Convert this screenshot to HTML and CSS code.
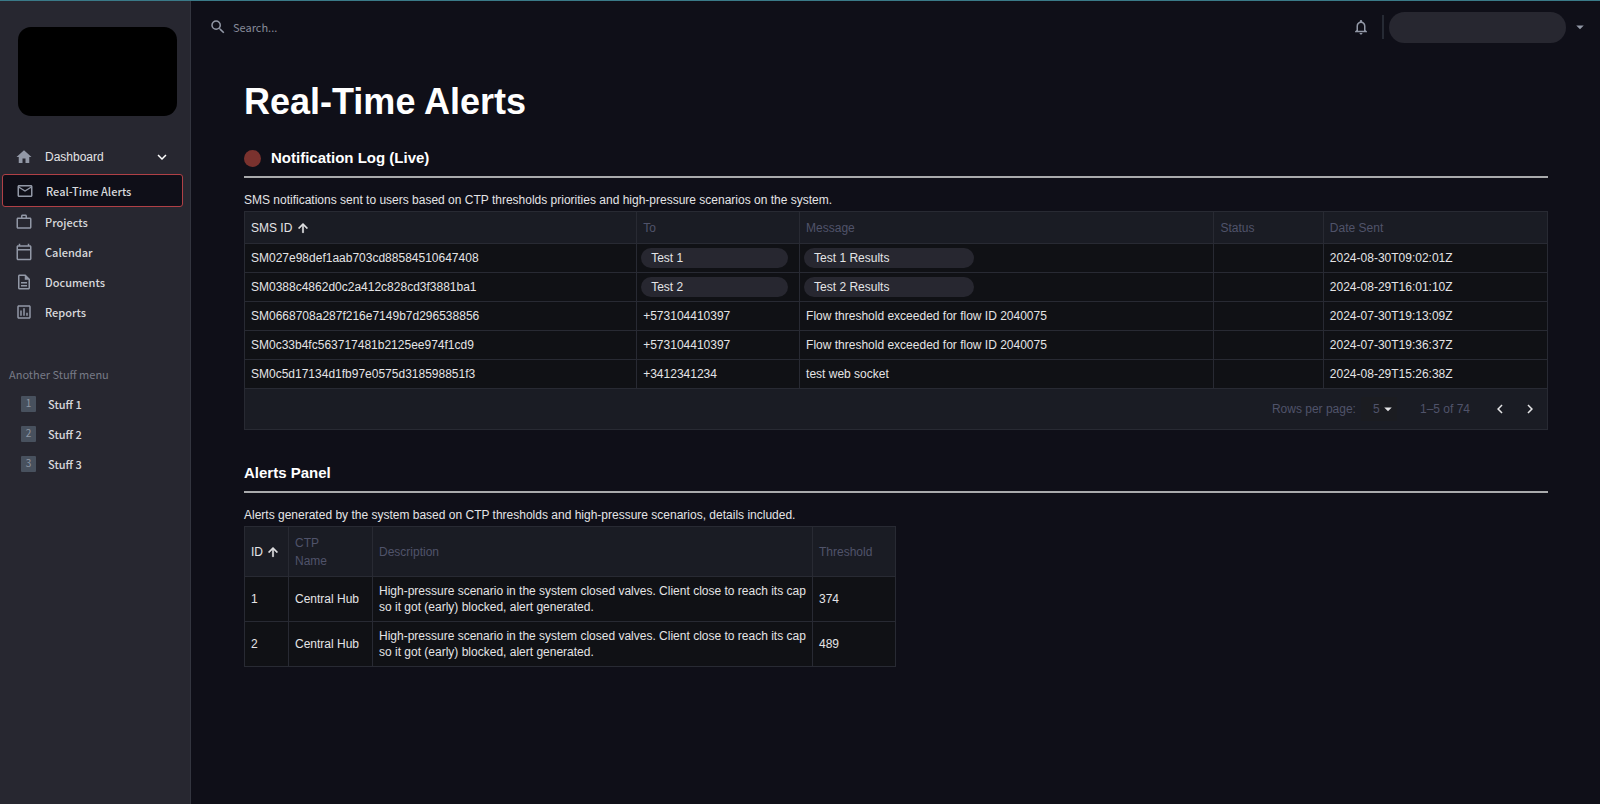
FILE: index.html
```html
<!DOCTYPE html>
<html lang="en">
<head>
<meta charset="UTF-8">
<meta name="viewport" content="width=device-width, initial-scale=1.0">
<title>Real-Time Alerts</title>
<link rel="stylesheet" href="styles.css">
</head>
<body>

<aside class="sidebar">
  <div class="logo"></div>

  <nav class="menu">
    <a href="#" class="dashboard">
      <svg viewBox="0 0 24 24"><path d="M10 20v-6h4v6h5v-8h3L12 3 2 12h3v8z"/></svg>
      <span>Dashboard</span>
      <svg class="chevron" viewBox="0 0 24 24"><path d="M7.41 8.59 12 13.17l4.59-4.58L18 10l-6 6-6-6z"/></svg>
    </a>
    <a href="#" class="active">
      <svg viewBox="0 0 24 24"><path d="M22 6c0-1.100-.9-2-2-2H4c-1.100 0-2 .9-2 2v12c0 1.100.9 2 2 2h16c1.100 0 2-.9 2-2zm-2 0-8 5-8-5zm0 12H4V8l8 5 8-5z"/></svg>
      <span>Real-Time Alerts</span>
    </a>
    <a href="#">
      <svg viewBox="0 0 24 24"><path d="M14 6V4h-4v2zM4 8v11h16V8zm16-2c1.110 0 2 .89 2 2v11c0 1.110-.89 2-2 2H4c-1.110 0-2-.89-2-2V8c0-1.110.89-2 2-2h4V4c0-1.110.89-2 2-2h4c1.110 0 2 .89 2 2v2z"/></svg>
      <span>Projects</span>
    </a>
    <a href="#">
      <svg viewBox="0 0 24 24"><path d="M20 3h-1V1h-2v2H7V1H5v2H4c-1.100 0-2 .9-2 2v16c0 1.100.9 2 2 2h16c1.100 0 2-.9 2-2V5c0-1.100-.9-2-2-2m0 18H4V10h16zm0-13H4V5h16z"/></svg>
      <span>Calendar</span>
    </a>
    <a href="#">
      <svg viewBox="0 0 24 24"><path d="M8 16h8v2H8zm0-4h8v2H8zm6-10H6c-1.100 0-2 .9-2 2v16c0 1.100.89 2 1.990 2H18c1.100 0 2-.9 2-2V8zm4 18H6V4h7v5h5z"/></svg>
      <span>Documents</span>
    </a>
    <a href="#">
      <svg viewBox="0 0 24 24"><path d="M19 3H5c-1.100 0-2 .9-2 2v14c0 1.100.9 2 2 2h14c1.100 0 2-.9 2-2V5c0-1.100-.9-2-2-2m0 16H5V5h14zM7 10h2v7H7zm4-3h2v10h-2zm4 6h2v4h-2z"/></svg>
      <span>Reports</span>
    </a>
  </nav>

  <h3 class="menu-title">Another Stuff menu</h3>
  <nav class="menu stuff">
    <a href="#"><span class="number">1</span><span>Stuff 1</span></a>
    <a href="#"><span class="number">2</span><span>Stuff 2</span></a>
    <a href="#"><span class="number">3</span><span>Stuff 3</span></a>
  </nav>
</aside>

<div class="page">
  <header class="topbar">
    <label class="search" for="searchInput">
      <svg viewBox="0 0 24 24"><path d="M15.500 14h-.79l-.28-.27A6.470 6.470 0 0 0 16 9.500 6.500 6.500 0 1 0 9.500 16c1.610 0 3.090-.59 4.230-1.570l.27.28v.79l5 4.990L20.490 19zm-6 0C7.010 14 5 11.990 5 9.500S7.010 5 9.500 5 14 7.010 14 9.500 11.990 14 9.500 14"/></svg>
      <input type="text" id="searchInput" placeholder="Search..." aria-label="Search">
    </label>
    <button type="button" class="bell" aria-label="Notifications">
      <svg viewBox="0 0 24 24"><path d="M12 22c1.100 0 2-.9 2-2h-4c0 1.100.9 2 2 2m6-6v-5c0-3.070-1.630-5.640-4.500-6.320V4c0-.83-.67-1.500-1.500-1.500s-1.500.67-1.500 1.500v.68C7.640 5.360 6 7.920 6 11v5l-2 2v1h16v-1zm-2 1H8v-6c0-2.480 1.510-4.500 4-4.500s4 2.020 4 4.500z"/></svg>
    </button>
    <button type="button" class="user" aria-label="Account">
      <span class="user-name"></span>
      <svg viewBox="0 0 24 24"><path d="m7 10 5 5 5-5z"/></svg>
    </button>
  </header>

  <main>
    <h1>Real-Time Alerts</h1>

    <section>
      <h2><span class="live-dot"></span>Notification Log (Live)</h2>
      <p>SMS notifications sent to users based on CTP thresholds priorities and high-pressure scenarios on the system.</p>
      <table class="log-table">
        <thead>
          <tr>
            <th class="sorted col-id">SMS ID <svg viewBox="0 0 24 24"><path d="m4 12 1.410 1.410L11 7.830V20h2V7.830l5.580 5.590L20 12l-8-8z"/></svg></th>
            <th class="col-to">To</th>
            <th class="col-message">Message</th>
            <th class="col-status">Status</th>
            <th>Date Sent</th>
          </tr>
        </thead>
        <tbody>
          <tr>
            <td>SM027e98def1aab703cd88584510647408</td>
            <td class="pill-cell"><span class="pill">Test 1</span></td>
            <td class="pill-cell"><span class="pill wide">Test 1 Results</span></td>
            <td></td>
            <td>2024-08-30T09:02:01Z</td>
          </tr>
          <tr>
            <td>SM0388c4862d0c2a412c828cd3f3881ba1</td>
            <td class="pill-cell"><span class="pill">Test 2</span></td>
            <td class="pill-cell"><span class="pill wide">Test 2 Results</span></td>
            <td></td>
            <td>2024-08-29T16:01:10Z</td>
          </tr>
          <tr>
            <td>SM0668708a287f216e7149b7d296538856</td>
            <td>+573104410397</td>
            <td>Flow threshold exceeded for flow ID 2040075</td>
            <td></td>
            <td>2024-07-30T19:13:09Z</td>
          </tr>
          <tr>
            <td>SM0c33b4fc563717481b2125ee974f1cd9</td>
            <td>+573104410397</td>
            <td>Flow threshold exceeded for flow ID 2040075</td>
            <td></td>
            <td>2024-07-30T19:36:37Z</td>
          </tr>
          <tr>
            <td>SM0c5d17134d1fb97e0575d318598851f3</td>
            <td>+3412341234</td>
            <td>test web socket</td>
            <td></td>
            <td>2024-08-29T15:26:38Z</td>
          </tr>
        </tbody>
      </table>
      <div class="pagination">
        <label for="rowsPerPage">Rows per page:</label>
        <div class="select">
          <select id="rowsPerPage">
            <option>5</option>
            <option>10</option>
            <option>25</option>
          </select>
          <svg viewBox="0 0 24 24"><path d="m7 10 5 5 5-5z"/></svg>
        </div>
        <span class="range">1–5 of 74</span>
        <button type="button" aria-label="Previous page"><svg viewBox="0 0 24 24"><path d="M15.410 7.410 14 6l-6 6 6 6 1.410-1.410L10.830 12z"/></svg></button>
        <button type="button" aria-label="Next page"><svg viewBox="0 0 24 24"><path d="M10 6 8.590 7.410 13.170 12l-4.580 4.590L10 18l6-6z"/></svg></button>
      </div>
    </section>

    <section>
      <h2>Alerts Panel</h2>
      <p>Alerts generated by the system based on CTP thresholds and high-pressure scenarios, details included.</p>
      <table class="alerts-table">
        <thead>
          <tr>
            <th class="sorted col-num">ID <svg viewBox="0 0 24 24"><path d="m4 12 1.410 1.410L11 7.830V20h2V7.830l5.580 5.590L20 12l-8-8z"/></svg></th>
            <th class="col-ctp">CTP<br>Name</th>
            <th class="col-desc">Description</th>
            <th>Threshold</th>
          </tr>
        </thead>
        <tbody>
          <tr>
            <td>1</td>
            <td>Central Hub</td>
            <td>High-pressure scenario in the system closed valves. Client close to reach its cap so it got (early) blocked, alert generated.</td>
            <td>374</td>
          </tr>
          <tr>
            <td>2</td>
            <td>Central Hub</td>
            <td>High-pressure scenario in the system closed valves. Client close to reach its cap so it got (early) blocked, alert generated.</td>
            <td>489</td>
          </tr>
        </tbody>
      </table>
    </section>
  </main>
</div>

</body>
</html>
```
FILE: styles.css
```css
* {
  box-sizing: border-box;
}
body {
  margin: 0;
  min-height: 100vh;
  display: flex;
  font-family: "Liberation Sans", Arial, sans-serif;
  font-size: 12px;
  background-color: #0f0f18;
  color: #e4e4e6;
  border-top: 1px solid #3a7a88;
}
svg {
  display: block;
  width: 18px;
  height: 18px;
  fill: currentColor;
}
button {
  background: none;
  border: none;
  padding: 0;
  color: inherit;
  cursor: pointer;
}

/* Sidebar */
.sidebar {
  flex: none;
  width: 191px;
  background-color: #272730;
  border-right: 1px solid #33353f;
  font-family: "Noto Sans CJK SC", sans-serif;
  font-size: 11px;
}
.logo {
  height: 89px;
  margin: 26px 13px 23px 18px;
  border-radius: 13px;
  background-color: #000;
}
.menu {
  display: flex;
  flex-direction: column;
  padding: 0 7px 0 2px;
}
.menu a {
  display: flex;
  align-items: center;
  gap: 12px;
  height: 30px;
  padding-left: 13px;
  color: #d8d9dc;
  font-weight: 500;
  text-decoration: none;
}
.menu svg {
  color: #9298a6;
}
.menu .dashboard {
  height: 35px;
  color: #e4e4e6;
  font-family: "Liberation Sans", Arial, sans-serif;
  font-size: 12px;
  font-weight: normal;
}
.menu .chevron {
  margin-left: auto;
  margin-right: 12px;
  color: #fff;
}
.menu .active {
  height: 33px;
  border: 1px solid #b04046;
  border-radius: 3px;
  background-color: #0f0f18;
}
.menu-title {
  margin: 35px 0 3px 9px;
  font-size: 11px;
  line-height: 24px;
  font-weight: normal;
  color: #777b87;
}
.stuff a {
  padding-left: 19px;
}
.number {
  width: 15px;
  height: 16px;
  border-radius: 1px;
  background-color: #48515e;
  color: #8f96a3;
  font-size: 10px;
  line-height: 13px;
  font-weight: normal;
  text-align: center;
}

/* Top bar */
.page {
  flex: 1;
  min-width: 0;
}
.topbar {
  display: flex;
  align-items: center;
  height: 52px;
  padding: 0 11px 0 18px;
  color: #9298a6;
}
.search {
  flex: 1;
  display: flex;
  align-items: center;
  gap: 6px;
}
.search input {
  flex: 1;
  padding: 0;
  border: none;
  outline: none;
  background: none;
  color: #e4e4e6;
  font-family: "Noto Sans CJK SC", sans-serif;
  font-size: 11px;
}
.search input::placeholder {
  color: #868b98;
}
.bell {
  padding-right: 12px;
}
.user {
  display: flex;
  align-items: center;
  gap: 5px;
}
.user::before {
  content: "";
  width: 2px;
  height: 24px;
  background-color: #262a34;
}
.user-name {
  width: 177px;
  height: 31px;
  border-radius: 16px;
  background-color: #272730;
}

/* Content */
main {
  padding: 28px 52px 40px 53px;
}
h1 {
  margin: 0 0 25px;
  font-size: 36px;
  line-height: 42px;
  color: #fff;
}
section {
  margin-bottom: 33px;
}
h2 {
  display: flex;
  align-items: center;
  gap: 10px;
  margin: 0;
  padding-bottom: 8px;
  border-bottom: 2px solid #a9aaac;
  font-size: 15px;
  line-height: 20px;
  color: #fff;
}
.live-dot {
  width: 17px;
  height: 17px;
  border-radius: 50%;
  background-color: #7a322e;
}
p {
  margin: 14px 0 3px;
  line-height: 16px;
}
table {
  width: 100%;
  table-layout: fixed;
  border-collapse: collapse;
  background-color: #101115;
}
th, td {
  height: 29px;
  padding: 0 6px;
  border: 1px solid #282a33;
  line-height: 16px;
  text-align: left;
}
th {
  height: 32px;
  background-color: #1a1c24;
  color: #50536a;
  font-weight: normal;
}
.sorted {
  color: #e4e4e6;
}
.sorted svg {
  display: inline-block;
  width: 14px;
  height: 14px;
  vertical-align: middle;
  stroke: currentColor;
}
.col-id {
  width: 30.1%;
}
.col-to {
  width: 12.5%;
}
.col-message {
  width: 31.8%;
}
.col-status {
  width: 8.4%;
}
.pill-cell {
  padding-left: 4px;
}
.pill {
  display: block;
  width: 147px;
  height: 20px;
  padding-left: 10px;
  border-radius: 10px;
  background-color: #272730;
  line-height: 20px;
}
.wide {
  width: 170px;
}
.pagination {
  display: flex;
  align-items: center;
  justify-content: flex-end;
  height: 41px;
  padding-right: 8px;
  border: 1px solid #282a33;
  border-top: none;
  background-color: #1a1c24;
  color: #50536a;
}
.select {
  position: relative;
  margin: 0 23px 0 5px;
}
.select select {
  width: 36px;
  height: 24px;
  padding: 0 0 0 12px;
  border: none;
  appearance: none;
  background-color: #1b1c21;
  color: inherit;
  font-family: inherit;
  font-size: 12px;
}
.select svg {
  position: absolute;
  top: 3px;
  right: 0;
  color: #e4e4e6;
  pointer-events: none;
}
.range {
  margin-right: 21px;
}
.pagination button {
  color: #e4e4e6;
}
.pagination button + button {
  margin-left: 12px;
}
.alerts-table {
  width: 50%;
}
.alerts-table th {
  height: 50px;
  line-height: 18px;
}
.alerts-table td {
  height: 45px;
}
.col-num {
  width: 44px;
}
.col-ctp {
  width: 84px;
}
.col-desc {
  width: 440px;
}
```
